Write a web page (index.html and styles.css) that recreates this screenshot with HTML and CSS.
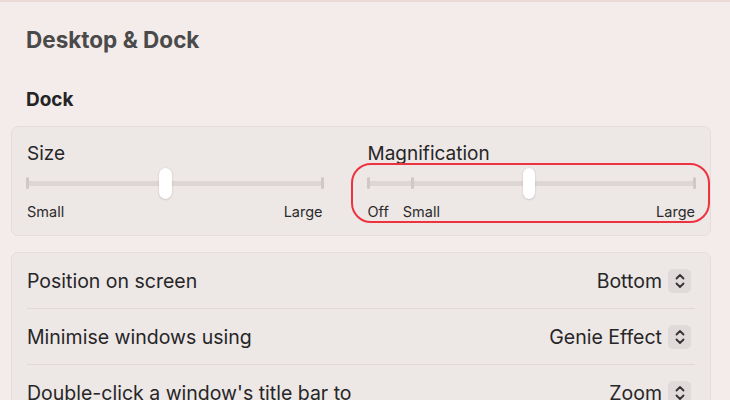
FILE: index.html
```html
<!DOCTYPE html>
<html lang="en">
<head>
<meta charset="utf-8">
<title>Desktop &amp; Dock</title>
<link rel="stylesheet" href="styles.css">
</head>
<body>
<div class="page">
  <h1 class="title">Desktop &amp; Dock</h1>
  <h2 class="section">Dock</h2>

  <div class="card sliders">
    <div class="col col-size">
      <div class="label">Size</div>
      <div class="slider-wrap">
        <div class="slider">
          <div class="track"></div>
          <span class="tick" style="left:-1px"></span>
          <span class="tick" style="left:calc(100% - 2px)"></span>
          <span class="knob" style="left:132px"></span>
        </div>
        <div class="marks">
          <span>Small</span>
          <span>Large</span>
        </div>
      </div>
    </div>
    <div class="col col-mag">
      <div class="label">Magnification</div>
      <div class="slider-wrap highlight">
        <div class="slider">
          <div class="track"></div>
          <span class="tick" style="left:-1px"></span>
          <span class="tick" style="left:43px"></span>
          <span class="tick" style="left:calc(100% - 2px)"></span>
          <span class="knob" style="left:155px"></span>
        </div>
        <div class="marks">
          <span class="off">Off</span>
          <span class="small">Small</span>
          <span class="large">Large</span>
        </div>
      </div>
    </div>
  </div>

  <div class="card list">
    <div class="row">
      <span class="row-label">Position on screen</span>
      <span class="select">Bottom <span class="stepper"><svg viewBox="0 0 10 18" width="10" height="18"><path d="M1.5 6.5 L5 3 L8.5 6.5 M1.5 11.5 L5 15 L8.5 11.5" fill="none" stroke="#333" stroke-width="1.8" stroke-linecap="round" stroke-linejoin="round"/></svg></span></span>
    </div>
    <div class="row">
      <span class="row-label">Minimise windows using</span>
      <span class="select">Genie Effect <span class="stepper"><svg viewBox="0 0 10 18" width="10" height="18"><path d="M1.5 6.5 L5 3 L8.5 6.5 M1.5 11.5 L5 15 L8.5 11.5" fill="none" stroke="#333" stroke-width="1.8" stroke-linecap="round" stroke-linejoin="round"/></svg></span></span>
    </div>
    <div class="row">
      <span class="row-label">Double-click a window's title bar to</span>
      <span class="select">Zoom <span class="stepper"><svg viewBox="0 0 10 18" width="10" height="18"><path d="M1.5 6.5 L5 3 L8.5 6.5 M1.5 11.5 L5 15 L8.5 11.5" fill="none" stroke="#333" stroke-width="1.8" stroke-linecap="round" stroke-linejoin="round"/></svg></span></span>
    </div>
  </div>
</div>
</body>
</html>
```

FILE: styles.css
```css
html, body {
  margin: 0;
  padding: 0;
  height: 100%;
  overflow: hidden;
}
body {
  background: #f4ecea;
  font-family: "Inter", "Liberation Sans", sans-serif;
  color: #262626;
  border-top: 2px solid #ecd9d5;
  box-sizing: border-box;
}
.page {
  padding: 0 19px 0 11px;
}
.title {
  margin: 0;
  padding: 24px 0 0 15px;
  font-size: 22.5px;
  line-height: 27px;
  font-weight: 700;
  color: #4b4a4a;
}
.section {
  margin: 0;
  padding: 35px 0 0 15px;
  font-size: 19px;
  line-height: 23px;
  font-weight: 700;
  color: #242424;
}
.card {
  background: #ede7e6;
  border: 1px solid #e4dddc;
  border-radius: 7px;
}
.sliders {
  margin-top: 15px;
  height: 108px;
  padding: 0 15px;
  display: flex;
  gap: 45px;
}
.col {
  padding-top: 16px;
  display: flex;
  flex-direction: column;
}
.col-size { width: 296px; }
.col-mag { width: 328px; }
.label {
  font-size: 19px;
  line-height: 22px;
  color: #262626;
}
.slider-wrap {
  margin-top: 3px;
  display: flex;
  flex-direction: column;
}
.slider {
  position: relative;
  height: 31px;
}
.track {
  position: absolute;
  left: 0;
  right: 0;
  top: 13px;
  height: 5px;
  border-radius: 2.5px;
  background: #ddd6d5;
}
.tick {
  position: absolute;
  top: 9px;
  width: 3px;
  height: 12px;
  border-radius: 1.5px;
  background: #cfc8c7;
}
.knob {
  position: absolute;
  top: 0;
  width: 12.5px;
  height: 31px;
  border-radius: 6.5px;
  background: #ffffff;
  box-shadow: 0 0.5px 2px rgba(0,0,0,0.22);
}
.marks {
  margin-top: 4px;
  display: flex;
  justify-content: space-between;
  font-size: 14.5px;
  line-height: 18px;
  color: #2b2b2b;
}
.highlight {
  position: relative;
}
.highlight::after {
  content: "";
  position: absolute;
  left: -17px;
  right: -15px;
  top: -5px;
  bottom: -2px;
  border: 2px solid #ee3340;
  border-radius: 20px;
  pointer-events: none;
}
.marks .small {
  margin-left: 14px;
  margin-right: auto;
}
.list {
  margin-top: 16px;
  padding: 0 15px;
}
.row {
  height: 55px;
  display: flex;
  align-items: center;
  justify-content: space-between;
  padding-right: 4px;
  border-bottom: 1px solid #e0d9d8;
  font-size: 19.5px;
}
.row:last-child { border-bottom: none; }
.row-label { color: #262626; }
.select {
  display: flex;
  align-items: center;
  gap: 6px;
  color: #262626;
}
.stepper {
  width: 23px;
  height: 24px;
  border-radius: 5px;
  background: #e1dada;
  display: flex;
  align-items: center;
  justify-content: center;
}
```
